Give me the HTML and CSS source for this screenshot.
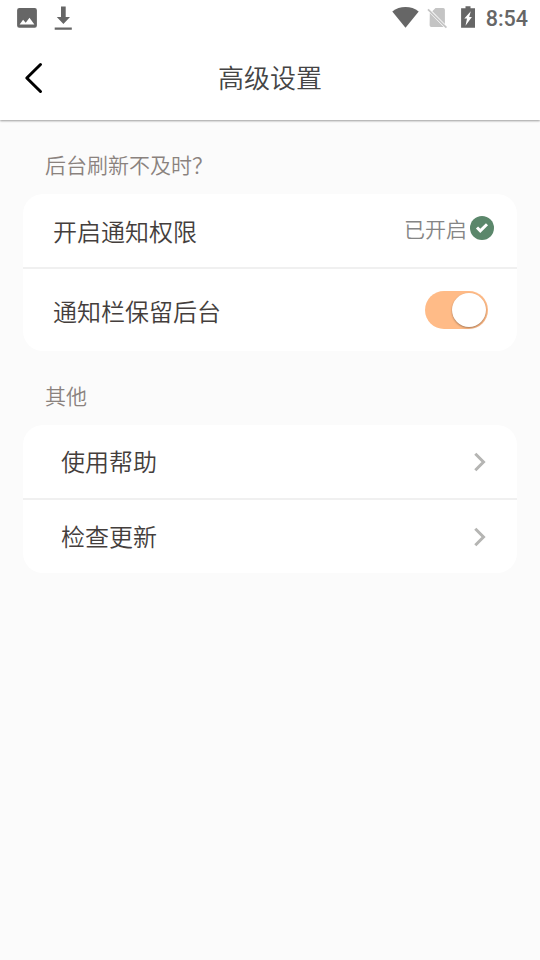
FILE: index.html
```html
<!DOCTYPE html>
<html lang="zh-CN">
<head>
<meta charset="utf-8">
<title>高级设置</title>
<link rel="stylesheet" href="styles.css">
</head>
<body>
<header class="top">
  <div class="status">
    <svg class="status-left" width="80" height="36" viewBox="0 0 80 36">
      <path fill="#666" fill-rule="evenodd" d="M19.3 8h15.4a2.200 2.200 0 0 1 2.200 2.200v15.400a2.200 2.200 0 0 1-2.200 2.200H19.300a2.200 2.200 0 0 1-2.200-2.200V10.200A2.200 2.200 0 0 1 19.300 8zM19.600 24.600h14.800l-4.900-6.800-3.800 5-2.600-3.100z"/>
      <path fill="#666" d="M61 6.500h4.700V17H70l-6.600 7L56.800 17H61zM54.700 27.500h17.100v2.200H54.700z"/>
    </svg>
    <div class="status-right">
      <svg width="100" height="36" viewBox="0 0 100 36">
        <path fill="#666" d="M12.300 11.500c7.400-5.900 19-5.900 26.400 0L25.500 27.800z"/>
        <path fill="#c4c4c4" d="M55.500 8h7.700a1.700 1.700 0 0 1 1.700 1.700v14.200L52.300 11.200zM49.800 13 63.600 27H51.300A1.700 1.700 0 0 1 49.600 25.300z"/>
        <path fill="none" stroke="#c4c4c4" stroke-width="1.700" d="M48 9.300 66.400 27.700"/>
        <path fill="#666" d="M85.500 6.300h5v1.900H95v19.600H81.100V8.200h4.400z"/>
        <path fill="#fff" d="M90.800 11.300 84.300 18.500h2.700l-1.500 7.200 6.400-8.800h-2.700z"/>
      </svg>
      <span class="time">8:54</span>
    </div>
  </div>
  <div class="bar">
    <svg class="back" width="26" height="36" viewBox="0 0 26 36"><path d="M20.500 4.500 6.800 18 20.500 31.500"/></svg>
    <h1 class="title">高级设置</h1>
  </div>
</header>
<main class="content">
  <h2 class="section">后台刷新不及时？</h2>
  <section class="card">
    <div class="row">
      <span class="label">开启通知权限</span>
      <span class="state">已开启</span>
      <svg class="check" width="24" height="24" viewBox="0 0 24 24"><circle cx="12" cy="12" r="12"/><path d="M7 11.500 10.300 14.900 17 8.300"/></svg>
    </div>
    <div class="row row-switch">
      <span class="label">通知栏保留后台</span>
      <span class="switch"><span class="knob"></span></span>
    </div>
  </section>
  <h2 class="section">其他</h2>
  <section class="card card-links">
    <div class="row">
      <span class="label">使用帮助</span>
      <svg class="arrow" width="14" height="20" viewBox="0 0 14 20"><path d="M2.300 1.800 10.500 10 2.300 18.200"/></svg>
    </div>
    <div class="row">
      <span class="label">检查更新</span>
      <svg class="arrow" width="14" height="20" viewBox="0 0 14 20"><path d="M2.300 1.800 10.500 10 2.300 18.200"/></svg>
    </div>
  </section>
</main>
</body>
</html>
```
FILE: styles.css
```css
* { box-sizing: border-box; }
body {
  margin: 0;
  min-height: 960px;
  background: #fbfbfb;
  color: #443e3c;
  font-family: "Noto Sans CJK SC", sans-serif;
  font-weight: 350;
}
svg { display: block; flex: none; }
h1, h2 { margin: 0; font-weight: 350; }
.top {
  height: 120px;
  background: #fff;
  box-shadow: 0 1px 2px rgba(0, 0, 0, .38);
}
.status {
  display: flex;
  justify-content: space-between;
  height: 36px;
}
.status-right { display: flex; padding-right: 12px; }
.time {
  width: 48px;
  text-align: right;
  font: 500 21.500px/38px Roboto, sans-serif;
  color: #666;
}
.bar {
  display: grid;
  grid-template-columns: 60px 1fr 60px;
  align-items: center;
  height: 84px;
}
.back { margin-left: 20px; }
.back path {
  fill: none;
  stroke: #000;
  stroke-width: 3;
  stroke-linecap: round;
  stroke-linejoin: round;
}
.title {
  padding-bottom: 2px;
  text-align: center;
  font-size: 26px;
  line-height: 38px;
  color: #444;
}
.content { padding: 28px 23px 0; }
.section {
  height: 46px;
  padding-left: 22px;
  font-size: 21px;
  line-height: 32px;
  color: #8a827e;
}
.card {
  margin-bottom: 28px;
  border-radius: 20px;
  background: #fff;
}
.row {
  display: flex;
  align-items: center;
  height: 74px;
  padding: 0 23px 0 30px;
}
.row + .row { border-top: 2px solid #f0f0f0; }
.card .row:first-child { height: 73px; }
.card .row-switch { height: 84px; padding-right: 29px; }
.row-switch .label { padding-top: 2px; }
.label {
  flex: 1;
  font-size: 24px;
  line-height: 36px;
}
.state {
  margin-right: 3px;
  padding-bottom: 5px;
  font-size: 21px;
  line-height: 30px;
  color: #858585;
}
.check { margin-bottom: 5px; }
.check circle { fill: #5b876b; }
.check path { fill: none; stroke: #fff; stroke-width: 3; }
.switch {
  display: flex;
  justify-content: flex-end;
  width: 63px;
  height: 38px;
  padding: 2px;
  border-radius: 19px;
  background: #ffbb87;
}
.knob {
  width: 34px;
  height: 34px;
  border-radius: 50%;
  background: #fff;
  box-shadow: 0 1px 2px rgba(0, 0, 0, .35);
}
.card-links .row { padding: 0 30px 0 38px; }
.card-links .row + .row { height: 75px; }
.card-links .label { padding-bottom: 1px; }
.arrow path {
  fill: none;
  stroke: #b5b5b3;
  stroke-width: 3;
}
```
